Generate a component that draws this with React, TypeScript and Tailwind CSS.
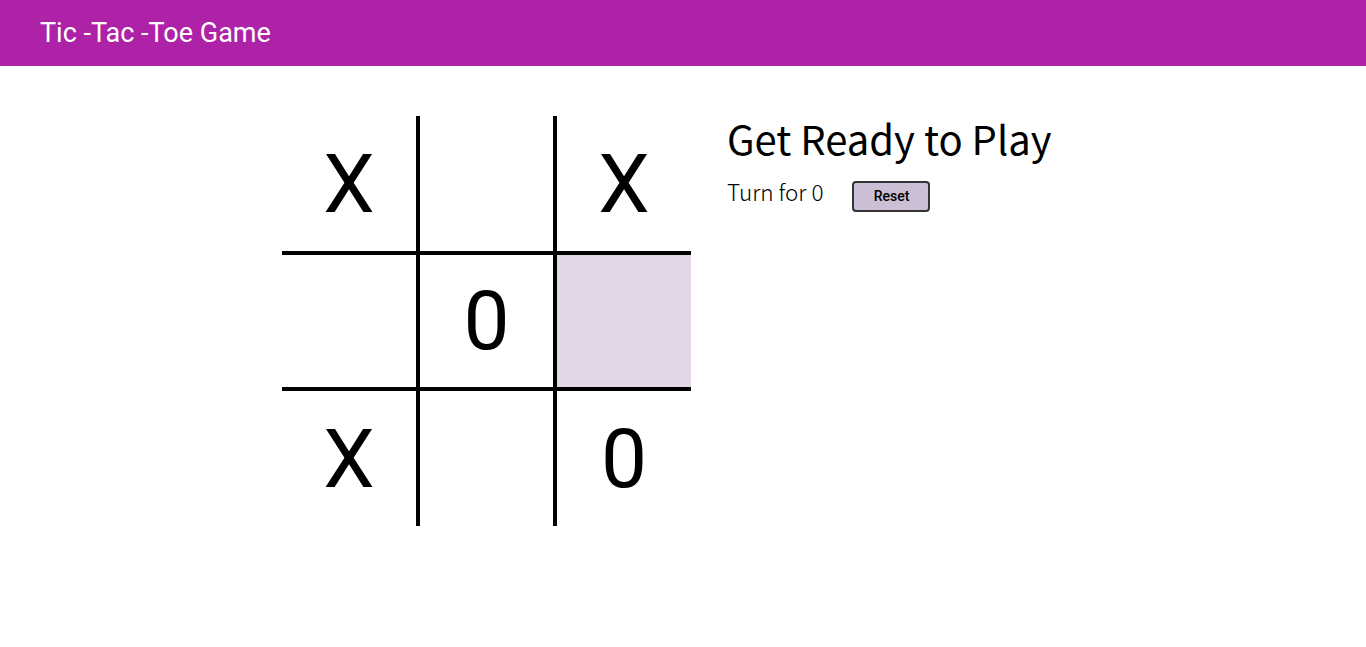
const board = ["X", "", "X", "", "0", "", "X", "", "0"]

function Cell({ value, index }: { value: string; index: number }) {
  const col = index % 3
  const row = Math.floor(index / 3)
  const highlighted = index === 5
  return (
    <div
      className={`flex items-center justify-center border-black text-[82px] leading-none ${
        col < 2 ? "border-r-4" : ""
      } ${row < 2 ? "border-b-4" : ""} ${highlighted ? "bg-[#e2d7e6]" : "bg-white"}`}
      style={{ fontFamily: "Roboto, sans-serif" }}
    >
      {value}
    </div>
  )
}

export default function App() {
  return (
    <div className="min-h-screen bg-white">
      <header className="flex h-[66px] items-center bg-[#ae22a8] px-10">
        <h1 className="text-[27px] text-white" style={{ fontFamily: "Roboto, sans-serif" }}>
          Tic -Tac -Toe Game
        </h1>
      </header>
      <main className="flex items-start gap-[36px] pl-[282px] pt-[50px]">
        <div className="grid grid-cols-[138px_137px_134px] grid-rows-[139px_136px_135px]">
          {board.map((v, i) => (
            <Cell key={i} value={v} index={i} />
          ))}
        </div>
        <div className="-mt-[3px]" style={{ fontFamily: "'Noto Sans CJK KR', 'Noto Sans', sans-serif" }}>
          <h2 className="text-[40px] leading-tight text-black">Get Ready to Play</h2>
          <div className="mt-[12px] flex items-start gap-[29px]">
            <span className="text-[22.5px] font-light text-black">Turn for 0</span>
            <button
              className="mt-[6px] h-[31px] w-[78px] rounded-[4px] border-2 border-[#333] bg-[#cbbfd6] text-[14px] font-medium text-black"
              style={{ fontFamily: "Roboto, sans-serif" }}
            >
              Reset
            </button>
          </div>
        </div>
      </main>
    </div>
  )
}
